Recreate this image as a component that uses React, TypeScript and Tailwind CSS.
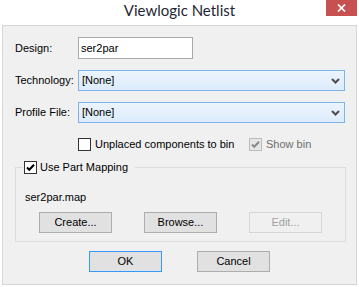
import React from "react";

const F = { fontFamily: '"Liberation Sans", Arial, sans-serif' };

function Check({ color }: { color: string }) {
  return (
    <svg width="11" height="11" viewBox="0 0 11 11">
      <path d="M2 5.5 L4.3 7.8 L9 2.8" fill="none" stroke={color} strokeWidth="2" />
    </svg>
  );
}

function Chevron() {
  return (
    <svg width="9" height="6" viewBox="0 0 9 6">
      <path d="M1 1 L4.5 4.5 L8 1" fill="none" stroke="#4d4d4d" strokeWidth="2" />
    </svg>
  );
}

function Select({ value }: { value: string }) {
  return (
    <div className="w-[267px] h-[21px] border border-[#7eb4ea] bg-gradient-to-b from-[#ecf4fc] to-[#dcecfc] flex items-center justify-between pl-[3px] pr-[4px] text-[11px] leading-[13px] text-black">
      <span>{value}</span>
      <Chevron />
    </div>
  );
}

function Btn({ label, variant }: { label: string; variant?: "default" | "disabled" }) {
  const cls =
    variant === "default"
      ? "border-[#3399ff] bg-[#e1e1e1] text-black"
      : variant === "disabled"
      ? "border-[#d5d5d5] bg-[#f0f0f0] text-[#a0a0a0]"
      : "border-[#adadad] bg-[#e1e1e1] text-black";
  return (
    <div className={`w-[73px] h-[21px] border flex items-center justify-center text-[11px] leading-[13px] ${cls}`}>
      {label}
    </div>
  );
}

export default function App() {
  return (
    <div className="w-[359px] h-[287px] bg-white flex flex-col overflow-hidden" style={F}>
      <div className="h-[25px] grid grid-cols-[33px_1fr_33px] items-start">
        <div />
        <div
          className="text-center text-[15px] leading-[21px] text-[#1f2633]"
          style={{ fontFamily: '"Segoe UI", Lato, "Noto Sans", sans-serif' }}
        >
          Viewlogic Netlist
        </div>
        <div className="w-[31px] h-[16px] bg-[#c75050] flex items-center justify-center">
          <svg width="9" height="8" viewBox="0 0 9 8">
            <path d="M1 0.5 L8 7.5 M8 0.5 L1 7.5" stroke="white" strokeWidth="1.7" />
          </svg>
        </div>
      </div>

      <div className="mx-[2px] h-[260px] border border-[#d6d6d6] bg-[#f0f0f0] flex flex-col items-start text-[11px] leading-[13px] text-black">
        {/* Design */}
        <div className="mt-[11px] ml-[12px] h-[22px] flex items-center">
          <div className="w-[63px]">Design:</div>
          <div className="w-[115px] h-[22px] border border-[#a9a9a9] bg-white flex items-center pl-[2px]">
            ser2par
          </div>
        </div>
        {/* Technology */}
        <div className="mt-[11px] ml-[12px] h-[21px] flex items-center">
          <div className="w-[63px]">Technology:</div>
          <Select value="[None]" />
        </div>
        {/* Profile */}
        <div className="mt-[11px] ml-[12px] h-[21px] flex items-center">
          <div className="w-[63px]">Profile File:</div>
          <Select value="[None]" />
        </div>
        {/* checkboxes */}
        <div className="mt-[15px] ml-[75px] h-[13px] flex items-center">
          <div className="w-[171px] flex items-center gap-[4px]">
            <div className="w-[13px] h-[13px] border border-[#333] bg-white" />
            <span>Unplaced components to bin</span>
          </div>
          <div className="flex items-center gap-[4px] text-[#6d6d6d]">
            <div className="w-[13px] h-[13px] border border-[#bcbcbc] bg-[#e6e6e6] flex items-center justify-center">
              <Check color="#8a8a8a" />
            </div>
            <span>Show bin</span>
          </div>
        </div>
        {/* group */}
        <fieldset className="mt-[10px] ml-[12px] w-[331px] border border-[#dcdcdc] pl-[9px] pb-[8px] pr-0">
          <legend className="-ml-[2px] pl-[1px] pr-[7px] h-[13px] flex items-center gap-[3px]">
            <div className="w-[13px] h-[13px] border border-[#333] bg-white flex items-center justify-center">
              <Check color="#000" />
            </div>
            <span>Use Part Mapping</span>
          </legend>
          <div className="mt-[17px]">ser2par.map</div>
          <div className="mt-[8px] ml-[14px] flex gap-[32px]">
            <Btn label="Create..." />
            <Btn label="Browse..." />
            <Btn label="Edit..." variant="disabled" />
          </div>
        </fieldset>
        {/* OK / Cancel */}
        <div className="mt-[9px] w-full flex justify-center gap-[35px]">
          <Btn label="OK" variant="default" />
          <Btn label="Cancel" />
        </div>
      </div>
    </div>
  );
}
